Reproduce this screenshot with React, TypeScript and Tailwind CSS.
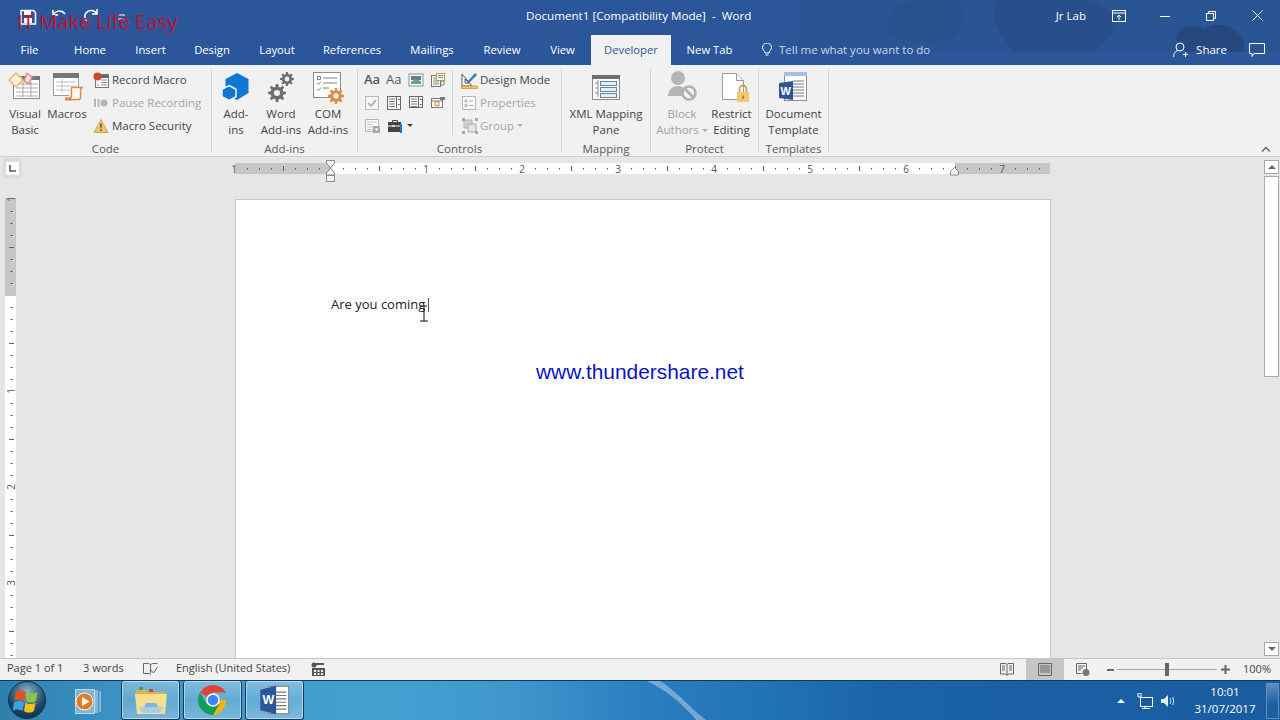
import type { ReactNode } from "react";

const tabs = [
  { label: "Home", w: "w-[62px]" },
  { label: "Insert", w: "w-[59px]" },
  { label: "Design", w: "w-[64px]" },
  { label: "Layout", w: "w-[66px]" },
  { label: "References", w: "w-[84px]" },
  { label: "Mailings", w: "w-[76px]" },
  { label: "Review", w: "w-[64px]" },
  { label: "View", w: "w-[57px]" },
];

const Ico = ({ w, h, children, className }: { w: number; h: number; children: ReactNode; className?: string }) => (
  <svg width={w} height={h} viewBox={`0 0 ${w} ${h}`} fill="none" className={className}>
    {children}
  </svg>
);

// eight toothed gear, computed so the teeth stay even at any size
const gearPath = (cx: number, cy: number, r: number) => {
  const pts: string[] = [];
  const inner = r * 0.72;
  for (let i = 0; i < 8; i++) {
    const a = (i * Math.PI) / 4;
    const step = Math.PI / 8;
    [
      [inner, a - step * 0.62],
      [r, a - step * 0.36],
      [r, a + step * 0.36],
      [inner, a + step * 0.62],
    ].forEach(([rad, t]) => {
      pts.push(`${(cx + rad * Math.sin(t)).toFixed(2)} ${(cy - rad * Math.cos(t)).toFixed(2)}`);
    });
  }
  return `M${pts.join("L")}z`;
};

const Gear = ({ cx, cy, r, fill }: { cx: number; cy: number; r: number; fill: string }) => (
  <g>
    <path d={gearPath(cx, cy, r)} fill={fill} />
    <circle cx={cx} cy={cy} r={r * 0.34} fill="#f1f1f1" />
  </g>
);

// ---- ribbon icons ----
const VisualBasicIcon = () => (
  <Ico w={34} h={30}>
    <rect x="5.5" y="4.5" width="26" height="22" fill="#fff" stroke="#8a8a8a" />
    <rect x="14" y="4" width="18" height="4" fill="#777" />
    <path d="M8 12h22M8 16h22M8 20h22M8 24h22M15 10v15M23 10v15" stroke="#a9a9a9" />
    <path d="M7 1l7 7-7 7-7-7z" fill="#fff3d0" stroke="#e3bb6a" strokeWidth="1.5" transform="translate(1)" />
    <path d="M19 1.500l5 3.500-3 7-5-3z" fill="#fde4e4" stroke="#d9868c" strokeWidth="1.5" />
  </Ico>
);
const MacrosIcon = () => (
  <Ico w={34} h={30}>
    <rect x="3.500" y="1.500" width="25" height="22" fill="#fff" stroke="#9a9a9a" />
    <rect x="3" y="1" width="26" height="5" fill="#777" />
    <path d="M6 10h20M6 14h20M6 18h14M12 7v14" stroke="#bdbdbd" />
    <path d="M21 15.500h11l-1.500 2v8c0 1-.5 2-2 2H18" fill="#fff" stroke="#e0883c" strokeWidth="1.5" />
    <path d="M21.500 16v8c0 1.500-1 2.500-3.500 2.500" stroke="#e0883c" strokeWidth="1.5" />
    <path d="M15 25.500h6v3h-6z" fill="#e0883c" />
  </Ico>
);
const RecordIcon = () => (
  <Ico w={16} h={16}>
    <rect x="2.5" y="2.5" width="13" height="13" fill="#fff" stroke="#777" />
    <path d="M3 3h12v3H3z" fill="#666" />
    <path d="M8 8h6M8 10.5h6M8 13h6M4 13h2" stroke="#888" />
    <circle cx="4.5" cy="4.5" r="4" fill="#d24726" />
  </Ico>
);
const PauseIcon = () => (
  <Ico w={16} h={14}>
    <path d="M1 3h2v8H1zM4.5 3h2v8h-2z" fill="#b5b5b5" />
    <circle cx="11" cy="7" r="3.5" fill="#b5b5b5" />
  </Ico>
);
const WarnIcon = () => (
  <Ico w={16} h={16}>
    <path d="M8 1.5l7 13H1z" fill="#efc27a" stroke="#d8a24e" />
    <path d="M7.2 5.5h1.6l-.3 5h-1zM7.2 11.5h1.6v1.6H7.2z" fill="#444" />
  </Ico>
);
const AddinsIcon = () => (
  <Ico w={30} h={30}>
    <path d="M16 1l11.500 6v14L16 28 4.500 21V7z" fill="#0f78d4" />
    <path d="M8 13.500l7 3.750v7.500L8 28.500l-7-3.750v-7.500z" fill="#0f78d4" stroke="#f1f1f1" strokeWidth="1.5" />
  </Ico>
);
const WordAddinsIcon = () => (
  <Ico w={32} h={30}>
    <Gear cx={22} cy={7} r={7} fill="#6d6d6d" />
    <Gear cx={12} cy={21} r={9} fill="#6d6d6d" />
  </Ico>
);
const ComAddinsIcon = () => (
  <Ico w={34} h={32}>
    <rect x="2.500" y="0.500" width="27" height="25" fill="#fff" stroke="#8d8d8d" />
    <path d="M6.500 4.500h3v3h-3zM12 6h14M12 11h14M12 16h6M6 11l1.500 1.500L10 9.500M6 17l1.500 1.500L10 15.500" stroke="#808080" />
    <Gear cx={25} cy={24} r={8} fill="#e5893d" />
  </Ico>
);
const ImageIcon = () => (
  <Ico w={16} h={14}>
    <rect x="1" y="1" width="14" height="12" fill="#fff" stroke="#909090" />
    <rect x="3" y="3" width="10" height="4" fill="#5f7f95" />
    <path d="M3 9l4-3 6 2v3H3z" fill="#6fa386" />
  </Ico>
);
const BlockIcon = () => (
  <Ico w={16} h={16}>
    <rect x="1.500" y="3.500" width="9" height="11" fill="#fff" stroke="#777" />
    <path d="M3 6h6M3 8h6M3 10h6M3 12h6" stroke="#888" />
    <rect x="6.500" y="1.500" width="8" height="7" fill="#fff" stroke="#c79a3d" />
    <path d="M8 3.500h5M8 5.500h5" stroke="#888" />
    <path d="M11 9h3v4h-3z" stroke="#888" />
  </Ico>
);
const CheckBoxIcon = () => (
  <Ico w={16} h={16}>
    <rect x="1.500" y="1.500" width="13" height="13" fill="#f4f4f4" stroke="#b9b9b9" />
    <path d="M4 8l3 3 5-6" stroke="#a6a6a6" strokeWidth="1.500" />
  </Ico>
);
const ListIcon = ({ wide }: { wide?: boolean }) => (
  <Ico w={16} h={16}>
    <rect x="1.500" y="1.500" width="13" height={wide ? 11 : 13} fill="#fff" stroke="#666" />
    <path d="M3 4h6M3 6.500h6M3 9h6M3 11.500h6" stroke="#777" />
    <path d="M10.500 2v11" stroke="#666" />
    <path d="M11.500 5l1.300-1.500L14 5zM11.500 9l1.300 1.500L14 9z" fill="#555" />
  </Ico>
);
const DateIcon = () => (
  <Ico w={16} h={14}>
    <rect x="1.500" y="2.500" width="11" height="9" fill="#fff" stroke="#777" />
    <path d="M1 5h12" stroke="#777" />
    <rect x="5" y="6" width="4" height="3.500" stroke="#d18b2b" />
    <path d="M10 1h5v3h-5z" fill="#777" />
  </Ico>
);
const LegacyIcon = () => (
  <Ico w={18} h={16}>
    <rect x="1.500" y="1.500" width="13" height="12" fill="#fff" stroke="#b5b5b5" />
    <path d="M3 4h10M3 6.500h6M3 9h6M3 11.500h6" stroke="#c0c0c0" />
    <rect x="9" y="8" width="7" height="7" fill="#a9a9a9" />
    <path d="M10.500 10.500h4l-2 2.500z" fill="#fff" />
  </Ico>
);
const ToolsIcon = () => (
  <Ico w={16} h={14}>
    <path d="M4.500 3V1.500h5V3" stroke="#444" />
    <rect x="0" y="3" width="13" height="10" fill="#444" />
    <path d="M0 7h13" stroke="#f1f1f1" />
    <path d="M4 6h3v2H4z" fill="#ddd" />
    <path d="M13 5v9" stroke="#1f78c1" strokeWidth="2" />
  </Ico>
);
const DesignIcon = () => (
  <Ico w={18} h={18}>
    <path d="M1 15V3l10 12z" fill="#fff" stroke="#555" />
    <path d="M4 12V8l4 4z" stroke="#555" />
    <path d="M7 10l7-8 2 2-8 8-2 1z" fill="#2f7fc1" />
    <rect x="0.500" y="15" width="16" height="2.500" fill="#f2c35b" stroke="#c78a2c" strokeWidth="0.700" />
  </Ico>
);
const PropsIcon = () => (
  <Ico w={16} h={16}>
    <rect x="1.500" y="1.500" width="13" height="13" fill="#f8f8f8" stroke="#b9b9b9" />
    <path d="M4 5h2v2H4zM4 9.500h2v2H4z" stroke="#b0b0b0" />
    <path d="M8 6h4M8 10.500h4" stroke="#b0b0b0" />
  </Ico>
);
const GroupIcon = () => (
  <Ico w={18} h={18}>
    <path d="M3 3h8v8H3z" fill="#d2d2d2" stroke="#b0b0b0" />
    <path d="M7 7h8v8H7z" fill="#e4e4e4" stroke="#a9a9a9" />
    <path d="M1 1h3v3H1zM14 1h3v3h-3zM1 14h3v3H1zM14 14h3v3h-3z" fill="#a8a8a8" />
  </Ico>
);
const XmlIcon = () => (
  <Ico w={30} h={28} className="mt-[2px]">
    <rect x="1.500" y="1.500" width="27" height="24" fill="#fff" stroke="#8a8a8a" />
    <rect x="1" y="1" width="28" height="4" fill="#6f6f6f" />
    <path d="M4 9h3M4 14h3M4 19h3M7 6v17" stroke="#8a8a8a" />
    <rect x="9.500" y="7.500" width="16" height="4" fill="#e3edf3" stroke="#5f8ba5" />
    <rect x="9.500" y="13.500" width="16" height="4" fill="#e3edf3" stroke="#5f8ba5" />
    <rect x="9.500" y="19.500" width="16" height="4" fill="#e3edf3" stroke="#5f8ba5" />
  </Ico>
);
const BlockAuthorsIcon = () => (
  <Ico w={34} h={32} className="-mt-[2px]">
    <circle cx="13" cy="8" r="7" fill="#b5b5b5" />
    <path d="M3 26c0-6 4-10 10-10 3 0 5 1 7 3l-2 7z" fill="#b5b5b5" />
    <circle cx="24" cy="23" r="6.500" fill="#f1f1f1" stroke="#b0b0b0" strokeWidth="2.500" />
    <path d="M20 19l8 8" stroke="#b0b0b0" strokeWidth="2.500" />
  </Ico>
);
const RestrictIcon = () => (
  <Ico w={36} h={32}>
    <path d="M8.500 1.500h14l7 7v19h-21z" fill="#fff" stroke="#9a9a9a" />
    <path d="M22.500 1.500v7h7" fill="#f1f1f1" stroke="#9a9a9a" />
    <path d="M25.500 20v-3a3.500 3.500 0 017 0v3" stroke="#c8a35a" strokeWidth="1.800" />
    <rect x="23" y="20" width="12" height="10" fill="#f2c872" />
    <rect x="28" y="23.500" width="2" height="3.500" fill="#b88a35" />
  </Ico>
);
const WordDoc = ({ w, h }: { w: number; h: number }) => (
  <svg width={w} height={h} viewBox="0 0 30 30" fill="none">
    <rect x="9" y="3" width="18" height="24" fill="#fff" stroke="#8a8a8a" />
    <path d="M16 8h9M16 11h9M16 14h9M16 17h9M16 20h9M16 23h9" stroke="#777" />
    <path d="M2 6l14-3.500v25L2 24z" fill="#2b579a" />
    <text x="4" y="18.500" fontSize="11" fontWeight="700" fill="#fff" fontFamily="'Liberation Sans', sans-serif">W</text>
  </svg>
);
const TemplateIcon = () => (
  <Ico w={32} h={32}>
    <rect x="6.500" y="0.500" width="22" height="28" fill="#fff" stroke="#8d8d8d" />
    <path d="M6 0h23v4H6z" fill="#a9c1e0" />
    <path d="M15 9h11M15 12h11M15 15h11M15 18h11M15 21h11M15 24h11" stroke="#777" />
    <path d="M1 11l14-2v19l-14-2z" fill="#2b579a" />
    <text x="2.500" y="23" fontSize="11" fontWeight="700" fill="#fff" fontFamily="'Liberation Sans', sans-serif">W</text>
  </Ico>
);

// ---- small shared pieces ----
const Caret = ({ light }: { light?: boolean }) => (
  <span
    className={`inline-block w-0 h-0 border-x-[3px] border-x-transparent border-t-[3px] ${light ? "border-t-[#b0b0b0]" : "border-t-[#444]"}`}
  />
);

const Big = ({ icon, lines, w, gray }: { icon: ReactNode; lines: ReactNode[]; w: string; gray?: boolean }) => (
  <div className={`flex flex-col items-center ${w}`}>
    <div className="h-[36px] pt-[2px] flex items-start justify-center">{icon}</div>
    {lines.map((l, i) => (
      <div key={i} className={`leading-[16px] whitespace-nowrap flex items-center gap-[3px] ${gray ? "text-[#a0a0a0]" : "text-[#444]"}`}>
        {l}
      </div>
    ))}
  </div>
);

const Small = ({ icon, children, gray }: { icon: ReactNode; children: ReactNode; gray?: boolean }) => (
  <div className={`h-[23px] flex items-center whitespace-nowrap ${gray ? "text-[#a6a6a6]" : "text-[#444]"}`}>
    <span className="w-[19px] flex justify-start">{icon}</span>
    {children}
  </div>
);

const Group = ({ w, label, className, children }: { w: string; label: string; className?: string; children: ReactNode }) => (
  <>
    <div className={`${w} h-full flex flex-col shrink-0`}>
      <div className={`flex-1 flex ${className ?? ""}`}>{children}</div>
      <div className="text-center text-[#595959] leading-[14px]">{label}</div>
    </div>
    <div className="w-px my-1 bg-[#d6d6d6] shrink-0" />
  </>
);

// ---- rulers ----
const hNums = [
  [234, "1"],
  [426, "1"],
  [522, "2"],
  [618, "3"],
  [714, "4"],
  [810, "5"],
  [906, "6"],
  [1002, "7"],
] as const;

const HRuler = () => {
  const x0 = 226;
  const ticks: ReactNode[] = [];
  for (let i = -7; i <= 59; i++) {
    const x = 331 + i * 12 - x0;
    if (i % 8 === 0) continue;
    if (i % 4 === 0) ticks.push(<path key={i} d={`M${x + 0.5} 9V14`} stroke="#666" />);
    else ticks.push(<rect key={i} x={x} y={11} width={1} height={1.5} fill="#555" />);
  }
  return (
    <div className="relative w-[818px] h-[42px] shrink-0">
      <div className="absolute left-px top-[6px] w-[815px] h-[11px] flex">
        <div className="w-[96px] bg-[#c6c6c6]" />
        <div className="w-[624px] bg-white" />
        <div className="flex-1 bg-[#c6c6c6]" />
      </div>
      <svg width="826" height="30" viewBox="0 0 826 30" fill="none" className="absolute -left-[8px] top-0">
        {ticks}
        {hNums.map(([x, n], i) => (
          <text key={i} x={x - x0} y="15.500" textAnchor="middle" fontSize="10" fill="#555" fontFamily="'Open Sans', sans-serif">
            {n}
          </text>
        ))}
        <path d="M100.500 3.500h8v2.500l-4 5 4 5v2h-8v-2l4-5-4-5z" fill="#f4f4f4" stroke="#8c8c8c" />
        <rect x="100.500" y="18.500" width="8" height="6" fill="#f4f4f4" stroke="#8c8c8c" />
        <path d="M728.500 10.500l4 4v3.500h-8v-3.500z" fill="#f4f4f4" stroke="#8c8c8c" />
      </svg>
    </div>
  );
};

const VRuler = () => {
  const y0 = 198;
  const ticks: ReactNode[] = [];
  for (let i = -7; i <= 31; i++) {
    const y = 295 + i * 12 - y0 + 8;
    if (i % 8 === 0) continue;
    if (i % 4 === 0) ticks.push(<path key={i} d={`M8 ${y + 0.5}H13`} stroke="#666" />);
    else ticks.push(<rect key={i} x={9.5} y={y} width={2} height={1} fill="#555" />);
  }
  return (
    <div className="ml-[5px] mt-[20px] w-[11px] h-[460px] bg-white relative">
      <div className="h-[98px] bg-[#c6c6c6]" />
      <svg width="19" height="470" viewBox="0 0 19 470" fill="none" className="absolute -left-[4px] -top-[8px]">
        {ticks}
        {[
          [9, "1"],
          [201, "1"],
          [297, "2"],
          [393, "3"],
        ].map(([y, n], i) => (
          <text key={i} transform={`translate(13.500 ${y}) rotate(-90)`} textAnchor="middle" fontSize="10" fill="#555" fontFamily="'Open Sans', sans-serif">
            {n}
          </text>
        ))}
      </svg>
    </div>
  );
};

const TaskBtn = ({ children }: { children: ReactNode }) => (
  <div className="w-[59px] flex items-center justify-center rounded-[3px] border border-[#123a60] border-t-0 shadow-[inset_0_0_0_1px_rgba(255,255,255,0.45)] bg-[linear-gradient(180deg,rgba(255,255,255,0.35)_0%,rgba(255,255,255,0.18)_50%,rgba(255,255,255,0.3)_100%)]">
    {children}
  </div>
);

export default function App() {
  return (
    <div className="relative w-[1280px] h-[720px] overflow-hidden flex flex-col bg-[#e6e6e6] font-['Open_Sans','Noto_Sans',sans-serif] text-[11.5px]">
      {/* blue header */}
      <div className="relative h-[65px] bg-[#2b579a] text-white shrink-0">
        <svg width="480" height="65" viewBox="0 0 480 65" className="absolute right-0 top-0" fill="none">
          <path d="M0 52H480V0H0z" fill="#2a5594" />
          <path d="M87 28c0-14 14-28 30-28h40c14 10 8 30-6 38-16 6-64 6-64-10z" fill="#28518e" />
          <path d="M197 0h90c24 8 40 22 20 40-6 6-10 10-20 12H215c-12-10-28-36-18-52z" fill="#284f8b" />
          <path d="M377 34c4-10 22-10 28-4 4-8 22-6 30 0 10 8 10 14 8 22h-56c-8-6-12-10-10-18z" fill="#25497f" />
        </svg>
        <div className="relative h-[35px] pb-[4px] flex items-center">
          <div className="w-[526px] h-full relative shrink-0">
            <svg width="140" height="33" viewBox="0 0 140 33" fill="none" className="absolute left-0 top-0">
              <path d="M21 10.500h12.500l2 2V24H21z" stroke="#fff" strokeWidth="1.500" />
              <rect x="24" y="11" width="7" height="4" fill="#fff" />
              <rect x="24" y="18" width="8" height="5" fill="#fff" />
              <path d="M53 15c3-5 9-5 12-1M53 10v5h5" stroke="#fff" strokeWidth="1.500" />
              <path d="M97 14c-2-4-8-5-11-1-2 3-1 6 1 8M97 9v5h-5" stroke="#fff" strokeWidth="1.500" />
              <path d="M118 15h7M118 19h7" stroke="#fff" />
            </svg>
          </div>
          <div className="whitespace-pre text-[11.65px]">Document1 [Compatibility Mode]  -  Word</div>
          <div className="ml-auto flex items-center h-full">
            <span className="mr-[26px]">Jr Lab</span>
            <svg width="14" height="12" viewBox="0 0 14 12" fill="none" className="mr-[34px]">
              <rect x="0.500" y="0.500" width="13" height="11" stroke="#fff" />
              <path d="M0 3h14" stroke="#fff" />
              <path d="M7 10V5M5 7l2-2 2 2" stroke="#fff" />
            </svg>
            <svg width="10" height="10" viewBox="0 0 10 10" fill="none" className="mr-[36px]">
              <path d="M0 5.500h10" stroke="#fff" />
            </svg>
            <svg width="10" height="10" viewBox="0 0 10 10" fill="none" className="mr-[36px]">
              <rect x="0.500" y="2.500" width="7" height="7" stroke="#fff" />
              <path d="M2.500 2.500V0.500h7v7H7.500" stroke="#fff" />
            </svg>
            <svg width="11" height="11" viewBox="0 0 11 11" fill="none" className="mr-[17px]">
              <path d="M0.500 0.500l10 10M10.500 0.500l-10 10" stroke="#fff" />
            </svg>
          </div>
        </div>
        <div className="relative h-[30px] flex items-stretch text-[11.25px]">
          <div className="w-[59px] flex items-center justify-center">File</div>
          {tabs.map((t) => (
            <div key={t.label} className={`${t.w} flex items-center justify-center`}>
              {t.label}
            </div>
          ))}
          <div className="w-[80px] bg-[#f1f1f1] text-[#2b579a] flex items-center justify-center">Developer</div>
          <div className="w-[77px] flex items-center justify-center">New Tab</div>
          <div className="ml-[13px] flex items-center text-[#c9d6ea] text-[11.5px]">
            <svg width="12" height="14" viewBox="0 0 12 14" fill="none" className="mr-[6px]">
              <path d="M4 10c0-2-2.500-3-2.500-5.500a4.500 4.500 0 019 0C10.500 7 8 8 8 10zM4.500 12h3" stroke="#fff" />
            </svg>
            Tell me what you want to do
          </div>
          <div className="ml-auto flex items-center text-[11.5px]">
            <svg width="16" height="16" viewBox="0 0 16 16" fill="none" className="mr-[7px]">
              <circle cx="7" cy="5" r="4" stroke="#fff" />
              <path d="M0.500 15c0-4 2.500-6.500 5.500-6.500M10 12.500h5M12.500 10v5" stroke="#fff" />
            </svg>
            <span className="mr-[22px]">Share</span>
            <svg width="16" height="15" viewBox="0 0 16 15" fill="none" className="mr-[15px]">
              <path d="M0.500 0.500h15v10H5l-2 3v-3H0.500z" stroke="#fff" />
            </svg>
          </div>
        </div>
      </div>

      {/* ribbon */}
      <div className="relative h-[92px] bg-[#f1f1f1] border-b border-[#d2d2d2] flex shrink-0">
        <Group w="w-[211px]" label="Code" className="pt-[5px]">
          <Big w="w-[50px]" icon={<VisualBasicIcon />} lines={["Visual", "Basic"]} />
          <Big w="w-[34px]" icon={<MacrosIcon />} lines={["Macros"]} />
          <div className="ml-[9px] -mt-[2px]">
            <Small icon={<RecordIcon />}>Record Macro</Small>
            <Small icon={<PauseIcon />} gray>
              Pause Recording
            </Small>
            <Small icon={<WarnIcon />}>Macro Security</Small>
          </div>
        </Group>
        <Group w="w-[145px]" label="Add-ins" className="pt-[5px] pl-[3px]">
          <Big w="w-[42px]" icon={<AddinsIcon />} lines={["Add-", "ins"]} />
          <Big w="w-[48px]" icon={<WordAddinsIcon />} lines={["Word", "Add-ins"]} />
          <Big w="w-[46px]" icon={<ComAddinsIcon />} lines={["COM", "Add-ins"]} />
        </Group>
        <Group w="w-[203px]" label="Controls" className="pt-[3px] pl-[6px]">
          <div className="w-[88px]">
            <div className="h-[23px] flex items-center gap-[6px]">
              <span className="w-[16px] text-[13px] font-semibold text-[#555]">Aa</span>
              <span className="w-[16px] text-[13px] text-[#555]">Aa</span>
              <ImageIcon />
              <BlockIcon />
            </div>
            <div className="h-[23px] flex items-center gap-[6px]">
              <CheckBoxIcon />
              <ListIcon />
              <ListIcon wide />
              <DateIcon />
            </div>
            <div className="h-[23px] flex items-center gap-[6px]">
              <LegacyIcon />
              <span className="flex items-center gap-[3px]">
                <ToolsIcon />
                <Caret />
              </span>
            </div>
          </div>
          <div className="w-px h-[65px] mt-[2px] bg-[#d6d6d6] mr-[8px]" />
          <div>
            <Small icon={<DesignIcon />}>Design Mode</Small>
            <Small icon={<PropsIcon />} gray>
              Properties
            </Small>
            <Small icon={<GroupIcon />} gray>
              <span className="flex items-center gap-[3px]">
                Group <Caret light />
              </span>
            </Small>
          </div>
        </Group>
        <Group w="w-[88px]" label="Mapping" className="pt-[5px] justify-center">
          <Big w="w-[88px]" icon={<XmlIcon />} lines={["XML Mapping", "Pane"]} />
        </Group>
        <Group w="w-[107px]" label="Protect" className="pt-[5px]">
          <Big
            w="w-[62px]"
            gray
            icon={<BlockAuthorsIcon />}
            lines={[
              "Block",
              <>
                Authors <Caret light />
              </>,
            ]}
          />
          <Big w="w-[37px]" icon={<RestrictIcon />} lines={["Restrict", "Editing"]} />
        </Group>
        <Group w="w-[69px]" label="Templates" className="pt-[5px]">
          <Big w="w-[69px]" icon={<TemplateIcon />} lines={["Document", "Template"]} />
        </Group>
        <div className="ml-auto self-end mr-[9px] mb-[3px]">
          <svg width="10" height="7" viewBox="0 0 10 7" fill="none">
            <path d="M1 5.500l4-4 4 4" stroke="#666" strokeWidth="1.500" />
          </svg>
        </div>
      </div>

      {/* document area */}
      <div className="flex-1 flex min-h-0">
        <div className="w-[234px] shrink-0">
          <div className="ml-[3px] mt-px w-[19px] h-[20px] bg-[#dcdcdc] flex items-center justify-center">
            <div className="w-[13px] h-[13px] bg-white flex items-center justify-center">
              <svg width="7" height="7" viewBox="0 0 7 7">
                <path d="M1 0v6h6" stroke="#555" strokeWidth="1.500" fill="none" />
              </svg>
            </div>
          </div>
          <VRuler />
        </div>
        <div className="w-[818px] flex flex-col shrink-0">
          <HRuler />
          <div className="flex-1 ml-px w-[816px] bg-white border border-b-0 border-[#c6c6c6] pl-[95px] pt-[95px]">
            <div className="text-[13px] text-[#222] leading-[18px]">Are you coming</div>
          </div>
        </div>
        <div className="flex-1 flex justify-end pr-[1px] pt-[3px]">
          <div className="w-[15px] flex flex-col bg-[#e6e6e6]">
            <div className="h-[14px] bg-white border border-[#ababab] flex items-center justify-center">
              <span className="w-0 h-0 border-x-[4px] border-x-transparent border-b-[4px] border-b-[#666]" />
            </div>
            <div className="mt-[2px] h-[201px] bg-white border border-[#ababab]" />
            <div className="flex-1" />
            <div className="h-[14px] mb-[2px] bg-white border border-[#ababab] flex items-center justify-center">
              <span className="w-0 h-0 border-x-[4px] border-x-transparent border-t-[4px] border-t-[#666]" />
            </div>
          </div>
        </div>
      </div>

      {/* status bar */}
      <div className="h-[22px] bg-[#f1f1f1] border-t border-[#c6c6c6] flex items-center text-[#444] text-[11px] shrink-0">
        <span className="ml-[7px] w-[76px] -mt-[2px]">Page 1 of 1</span>
        <span className="w-[60px] -mt-[2px]">3 words</span>
        <svg width="15" height="14" viewBox="0 0 15 14" fill="none" className="mr-[18px] -mt-[2px]">
          <path d="M0.500 1.500h5l2 1 2-1h5M0.500 1.500v10h6l1 1.500M7.500 3v8" stroke="#666" />
          <path d="M8 8l2.500 3 4-6" stroke="#666" />
        </svg>
        <span className="w-[135px] -mt-[2px]">English (United States)</span>
        <svg width="14" height="14" viewBox="0 0 14 14" className="-mt-[2px]">
          <circle cx="3" cy="3" r="2.500" fill="#555" />
          <rect x="5" y="1" width="8" height="2" fill="#555" />
          <rect x="1" y="6" width="13" height="8" fill="#555" />
          <path d="M3 8h2v2H3zM6.500 8h2v2h-2zM10 8h2v2h-2zM3 11h2v2H3zM6.500 11h2v2h-2zM10 11h2v2h-2z" fill="#f1f1f1" />
        </svg>
        <div className="ml-auto flex items-center h-full">
          <svg width="14" height="13" viewBox="0 0 14 13" fill="none" className="mr-[12px]">
            <path d="M0.500 0.500h5.500l1 1 1-1h5.500v10.500H8l-1 1.500-1-1.500H0.500zM7 1.500V11M2 3h3M2 5h3M2 7h3M9 3h3M9 5h3M9 7h3" stroke="#666" />
          </svg>
          <div className="w-[38px] h-full bg-[#c6c6c6] flex items-center justify-center">
            <svg width="14" height="13" viewBox="0 0 14 13" fill="none">
              <path d="M0.500 0.500h13v12h-13zM2 3h10M2 5h10M2 7h10M2 9h10" stroke="#666" />
            </svg>
          </div>
          <svg width="14" height="13" viewBox="0 0 14 13" fill="none" className="ml-[12px] mr-[17px]">
            <path d="M0.500 0.500h10v7M0.500 0.500v10h5M2 3h7M2 5h5M2 7h3" stroke="#666" />
            <circle cx="10" cy="9.500" r="3.500" fill="#777" />
          </svg>
          <span className="w-[7px] h-[2px] bg-[#666]" />
          <div className="relative w-[100px] h-px bg-[#a6a6a6] mx-[3px]">
            <span className="absolute left-[48px] -top-[6px] w-[4px] h-[13px] bg-[#666]" />
          </div>
          <svg width="9" height="9" viewBox="0 0 9 9" className="ml-px mr-[13px]">
            <path d="M0 4.500h9M4.500 0v9" stroke="#666" strokeWidth="2" />
          </svg>
          <span className="mr-[9px]">100%</span>
        </div>
      </div>

      {/* windows taskbar */}
      <div className="relative h-[40px] border-t border-[#123a60] flex items-center shrink-0 bg-[linear-gradient(90deg,#2f7fae_0%,#3d94c6_10%,#45a0d2_30%,#3f97cc_40%,#2a7fc0_50%,#2272b6_60%,#1b62a8_70%,#1a5ca0_100%)]">
        <svg width="80" height="40" viewBox="0 0 80 40" className="absolute left-[640px] top-0">
          <path d="M7 0h13c14 8 27 24 47 40H57C42 22 27 10 7 0z" fill="#fff" opacity="0.35" />
        </svg>
        <svg width="44" height="40" viewBox="0 0 44 40" className="ml-[6px] relative shrink-0">
          <defs>
            <radialGradient id="orb" cx="0.500" cy="0.300" r="0.750">
              <stop offset="0" stopColor="#8ab8d0" />
              <stop offset="0.650" stopColor="#1c4a68" />
              <stop offset="1" stopColor="#0e2c42" />
            </radialGradient>
          </defs>
          <circle cx="21" cy="19" r="18.500" fill="url(#orb)" stroke="#14344a" />
          <path d="M10 11c3-2 7-2 10 0l-1.500 9c-3-2-7-2-10 0z" fill="#e2541f" />
          <path d="M21.500 11c3 2 7 2 10 0L30 20c-3 2-7 2-10 0z" fill="#8cc63f" />
          <path d="M8 21.500c3-2 7-2 10 0L16.500 30c-3-2-7-2-10 0z" fill="#3ba3e0" />
          <path d="M19.500 21.500c3 2 7 2 10 0L28 30c-3 2-7 2-10 0z" fill="#f4c020" />
        </svg>
        <svg width="30" height="34" viewBox="0 0 30 34" className="ml-[25px] relative shrink-0">
          <path d="M20 6h3v23h-3zM24 7h2v21h-2z" fill="#8ab8d8" />
          <rect x="0.500" y="5.500" width="19" height="24" fill="#7fb5d8" stroke="#b8d8ec" />
          <circle cx="9.500" cy="17.500" r="8.500" fill="#e8791e" stroke="#fff" strokeWidth="1" />
          <path d="M7 13l7.500 4.500L7 22z" fill="#fff" />
        </svg>
        <div className="ml-[16px] flex gap-[3px] relative self-stretch">
          <TaskBtn>
            <svg width="34" height="30" viewBox="0 0 34 30">
              <path d="M2 5h9l2 2h18v6H2z" fill="#d9b44a" />
              <path d="M5 2h4v3H5z" fill="#3aa655" />
              <path d="M15 4h4v3h-4z" fill="#d24726" />
              <path d="M1 9h32l-2 20H3z" fill="#f6e08f" />
              <path d="M5 22h24l-3 6H8z" fill="#a5d0e8" />
              <path d="M12 18h10l2 4H10z" fill="#7fb5d8" />
            </svg>
          </TaskBtn>
          <TaskBtn>
            <svg width="30" height="30" viewBox="0 0 30 30">
              <path d="M15 15L2.010 7.500A15 15 0 0127.990 7.500H15z" fill="#db4437" />
              <path d="M15 15h12.990A15 15 0 0115 30l6.500-11.250z" fill="#f4b400" />
              <path d="M15 15l-6.500 3.750L2.010 7.500A15 15 0 0015 30l6.500-11.250z" fill="#0f9d58" />
              <circle cx="15" cy="15" r="6.800" fill="#fff" />
              <circle cx="15" cy="15" r="5.300" fill="#4285f4" />
            </svg>
          </TaskBtn>
          <TaskBtn>
            <WordDoc w={34} h={34} />
          </TaskBtn>
        </div>
        <div className="relative ml-auto flex items-center h-full text-white text-[11.5px]">
          <span className="w-0 h-0 border-x-[4px] border-x-transparent border-b-[4px] border-b-white mr-[12px]" />
          <svg width="16" height="16" viewBox="0 0 16 16" fill="none" className="mr-[8px]">
            <rect x="3.500" y="4.500" width="12" height="9" fill="#1d5a96" stroke="#fff" />
            <path d="M1 0h3v4H1zM8 14v2M5 15.500h8" stroke="#fff" />
          </svg>
          <svg width="15" height="14" viewBox="0 0 15 14" fill="none" className="mr-[18px]">
            <path d="M0 5h3l4-4v12l-4-4H0z" fill="#e6eef5" />
            <path d="M9 4c1 2 1 4 0 6M11.500 3c1.500 2.500 1.500 5.500 0 8" stroke="#cfe0ee" />
          </svg>
          <div className="w-[62px] text-center leading-[17px] -mt-[2px]">
            <div>10:01</div>
            <div className="whitespace-nowrap">31/07/2017</div>
          </div>
          <div className="ml-[10px] mr-[1px] w-[13px] h-[36px] border border-[#5f8fbb] bg-[linear-gradient(180deg,#5d8fbb_0%,#1e5f9f_60%)]" />
        </div>
      </div>

      {/* overlays */}
      <div className="absolute left-[17px] top-[7px] text-[20.3px] leading-[28px] text-[#c0142f] whitespace-nowrap">IT Make Life Easy</div>
      <div className="absolute left-[536px] top-[358px] text-[20.9px] leading-[28px] text-[#0a14c0] font-['Liberation_Sans',sans-serif] whitespace-nowrap">
        www.thundershare.net
      </div>
      <svg width="14" height="26" viewBox="0 0 14 26" fill="none" className="absolute left-[417px] top-[297px]">
        <path d="M11.500 1v14" stroke="#555" />
        <path d="M3 9h3.500M7 9h3M7 9v15M3 24h8" stroke="#111" />
      </svg>
    </div>
  );
}
